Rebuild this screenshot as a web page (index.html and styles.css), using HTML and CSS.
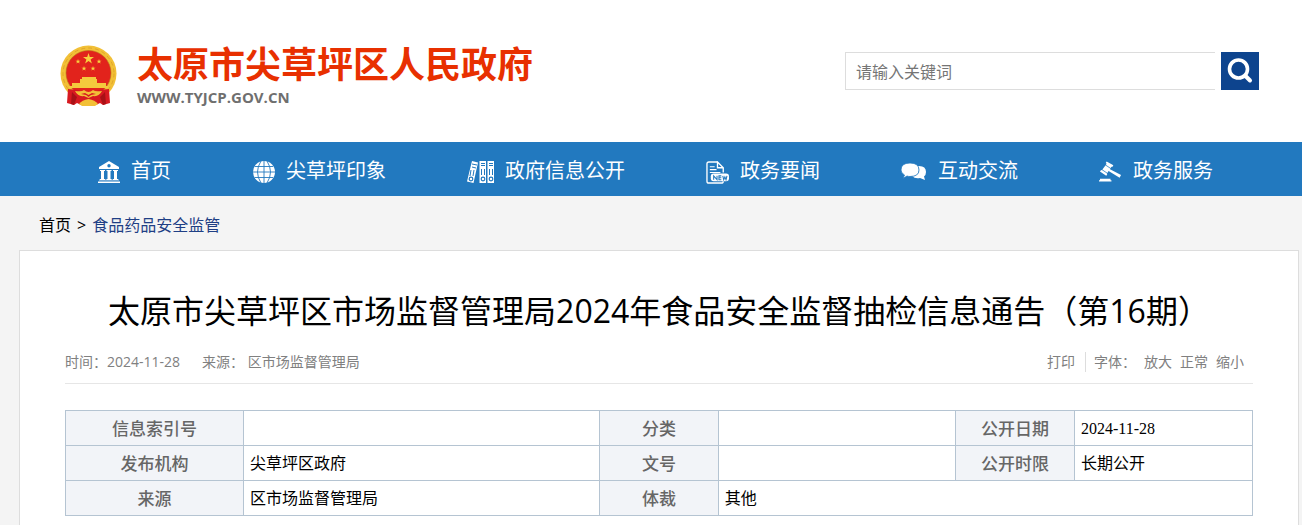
FILE: index.html
```html
<!DOCTYPE html>
<html lang="zh-CN">
<head>
	<meta charset="UTF-8">
	<meta name="viewport" content="width=device-width, initial-scale=1.0">
	<title>太原市尖草坪区人民政府</title>
	<link rel="stylesheet" href="styles.css">
</head>
<body>
	<header class="header">
		<a class="logo" href="#">
			<svg class="emblem" viewBox="0 0 57 61" aria-hidden="true">
				<circle cx="28.500" cy="28.500" r="28" fill="#f2c037"/>
				<circle cx="28.500" cy="28.500" r="25.500" fill="none" stroke="#e0a62a" stroke-width="1" stroke-dasharray="4 3"/>
				<circle cx="28.500" cy="28" r="22.500" fill="#e2231c" stroke="#b9701c" stroke-width=".6"/>
				<path fill="#f8cf3e" d="M28.500 8l1.300 4h4.200l-3.400 2.500 1.300 4-3.400-2.500-3.400 2.500 1.300-4L23 12h4.200z"/>
				<path id="star" fill="#f8cf3e" d="M18 14l.6 1.700h1.900l-1.500 1.100.6 1.800-1.600-1.100-1.600 1.100.6-1.800-1.500-1.100h1.900z"/>
				<use href="#star" x="21"/>
				<use href="#star" x="6" y="7"/>
				<use href="#star" x="15" y="7"/>
				<path fill="#f4c93d" d="M22 32h14v2h1v4h9v3h2v2H9v-2h3v-3h8v-4h2z"/>
				<path fill="#d71920" d="M8 44l10 1 10.500 4L39 45l10-1 1 14-7 2-3-2-4 2H21l-4-2-3 2-7-2z"/>
				<path fill="#a81116" d="M12 47l5 5-3 8-3-1zM45 47l-5 5 3 8 3-1z"/>
				<path fill="#f2c037" d="M15 46q7 1 9-1 4.500 4 9 0 2 2 9 1-3 6-9 5l-4.500 2L24 51q-6 1-9-5z"/>
				<path fill="#d71920" d="M21 49l4-1 3.500 2 3.500-2 4 1-5 1-2.500 2-2.500-2z"/>
				<path fill="#f2c037" d="M19 59q3-4 9.500-5 6.500 1 9.500 5l-3 2H22z"/>
			</svg>
			<span class="logo-text">
				<strong>太原市尖草坪区人民政府</strong>
				<span>WWW.TYJCP.GOV.CN</span>
			</span>
		</a>
		<form class="search">
			<input type="text" placeholder="请输入关键词" aria-label="请输入关键词">
			<button type="button" aria-label="搜索">
				<svg width="26" height="26" viewBox="0 0 26 26" fill="none" stroke="#fff" stroke-linecap="round">
					<circle cx="11.500" cy="11" r="9" stroke-width="3.600"/>
					<path d="M18.500 18l4.500 4.500" stroke-width="4"/>
				</svg>
			</button>
		</form>
	</header>

	<nav class="nav">
		<a href="#">
			<svg width="22" height="22" viewBox="0 0 22 22" fill="#fff">
				<path fill-rule="evenodd" d="M11 0l10 6v2H1V6zM11 3a1.700 1.700 0 1 0 0 3.400A1.700 1.700 0 0 0 11 3z"/>
				<path d="M2 9h5v1H6v8h1v1H2v-1h1v-8H2zM8.500 9h5v1h-1v8h1v1h-5v-1h1v-8h-1zM15 9h5v1h-1v8h1v1h-5v-1h1v-8h-1zM0 20.500h22V22H0z"/>
				<path opacity=".7" d="M1 18.500h20v1H1z"/>
			</svg>
			首页
		</a>
		<a href="#">
			<svg width="23" height="22" viewBox="0 0 23 22">
				<circle cx="12" cy="11" r="11" fill="#fff"/>
				<path fill="none" stroke="#2279bf" stroke-width=".9" d="M12 0v22M1 11h22M3 5.500h18M3 16.500h18M9 0Q2 11 9 22M15 0q7 11 0 22"/>
			</svg>
			尖草坪印象
		</a>
		<a href="#">
			<svg width="27" height="22" viewBox="0 0 27 22">
				<path fill="#fff" d="M5 0l6 1.500L6.500 22 0 20.500zM12.500 0h6.500v22h-6.500zM20.500 0H27v22h-6.500z"/>
				<path fill="none" stroke="#2279bf" d="M5 3l5 1M5 6l4 1M14 2.500h4M14 4.500h4M22 2.500h4M22 4.500h4M14.500 8v6M17.500 8v6M22.500 8v6M25.500 8v6M4 9l-1 6M7 9l-1 6"/>
				<g fill="#fff" stroke="#2279bf" stroke-width="1.200"><circle cx="4" cy="18" r="1.800"/><circle cx="16" cy="18" r="1.800"/><circle cx="24" cy="18" r="1.800"/></g>
			</svg>
			政府信息公开
		</a>
		<a href="#">
			<svg width="23" height="23" viewBox="0 0 24 24">
				<path fill="none" stroke="#fff" stroke-width="1.400" d="M12 1H3Q1 1 1 3v18q0 2 2 2h13q2 0 2-2M18 12V7l-6-6v6h6"/>
				<path fill="none" stroke="#fff" stroke-width="1.200" d="M4 6h5M4 9h7M4 12h11"/>
				<rect x="5" y="13" width="19" height="8" rx="3" fill="#fff"/>
				<path fill="none" stroke="#2279bf" stroke-width="1.100" d="M8 19.500v-4l3.500 4v-4M16 15.500h-2.500v4H16M13.500 17.500H16M17.500 15.500l1 4 1.200-3 1.200 3 1-4"/>
			</svg>
			政务要闻
		</a>
		<a href="#">
			<svg width="26" height="18" viewBox="0 0 26 18">
				<path fill="#fff" d="M16 3q9-1 9 6 0 3-2 4.500l1 3.500-5-2q-5 1-8-2 8-1 7-7z"/>
				<path fill="#fff" stroke="#2279bf" stroke-width=".8" d="M9 0q9 0 9 7 0 6.500-9 6.500-1.500 0-3-.5l-4 2.500L3.500 12Q0 10 0 7q0-7 9-7z"/>
			</svg>
			互动交流
		</a>
		<a href="#">
			<svg width="23" height="22" viewBox="0 0 24 22" fill="#fff">
				<path d="M8 0l7 4-1.200 1.800-.8-.3L11.500 8 23 14l-1.500 3L10 10l-2 3 .7.600L7.500 15 1 10.500 2.200 9l.8.300L8 2.500 7 1.500zM1 18h11v1.500h1V21H0v-1.500h1z"/>
				<path fill="none" stroke="#2279bf" stroke-width=".8" d="M6.500 3.500l6 4M3 8.500l6 4"/>
			</svg>
			政务服务
		</a>
	</nav>

	<div class="crumb">
		<a href="#">首页</a>
		<span>&gt;</span>
		<a class="current" href="#">食品药品安全监管</a>
	</div>

	<main class="article">
		<h1>太原市尖草坪区市场监督管理局2024年食品安全监督抽检信息通告（第16期）</h1>
		<div class="meta">
			<span>时间：2024-11-28</span>
			<span>来源： 区市场监督管理局</span>
			<div class="tools">
				<a class="print" href="#">打印</a>
				<span>字体：</span>
				<a href="#">放大</a>
				<a href="#">正常</a>
				<a href="#">缩小</a>
			</div>
		</div>
		<table class="info">
			<colgroup>
				<col class="w15"><col class="w30"><col class="w10"><col class="w20"><col class="w10"><col class="w15">
			</colgroup>
			<tr>
				<th>信息索引号</th>
				<td></td>
				<th>分类</th>
				<td></td>
				<th>公开日期</th>
				<td>2024-11-28</td>
			</tr>
			<tr>
				<th>发布机构</th>
				<td>尖草坪区政府</td>
				<th>文号</th>
				<td></td>
				<th>公开时限</th>
				<td>长期公开</td>
			</tr>
			<tr>
				<th>来源</th>
				<td>区市场监督管理局</td>
				<th>体裁</th>
				<td colspan="3">其他</td>
			</tr>
		</table>
	</main>
</body>
</html>
```
FILE: styles.css
```css
*{
	margin: 0;
	padding: 0;
	box-sizing: border-box;
}
body{
	display: flex;
	flex-direction: column;
	min-height: 100vh;
	background: #f4f4f4;
	color: #000;
	font-family: "Open Sans", "Noto Sans CJK SC", sans-serif;
	font-size: 16px;
}
a{
	color: inherit;
	text-decoration: none;
}

/* header */
.header{
	display: flex;
	justify-content: space-between;
	align-items: center;
	height: 142px;
	padding: 0 43px 0 60px;
	background: #fff;
}
.logo{
	display: flex;
	align-items: center;
	gap: 20px;
	padding-top: 8px;
}
.emblem{
	width: 57px;
	height: 61px;
}
.logo-text{
	display: flex;
	flex-direction: column;
	color: #6f6f6f;
	font-size: 15px;
	font-weight: 700;
	line-height: 20px;
}
.logo-text strong{
	color: #e83000;
	font-size: 36px;
	font-weight: 700;
	line-height: 44px;
}
.search{
	display: flex;
	gap: 6px;
}
.search input{
	width: 370px;
	height: 38px;
	padding: 2px 10px 0;
	border: 1px solid #ddd;
	border-right: none;
	background: #fff;
	font: inherit;
	outline: none;
}
.search input::placeholder{
	color: #757575;
}
.search button{
	display: flex;
	justify-content: center;
	align-items: center;
	width: 38px;
	height: 38px;
	border: none;
	background: #0d448e;
	cursor: pointer;
}

/* nav */
.nav{
	display: flex;
	gap: 81px;
	height: 54px;
	padding-left: 98px;
	background: #2279bf;
	color: #fff;
	font-size: 20px;
	line-height: 50px;
	white-space: nowrap;
}
.nav a{
	display: flex;
	align-items: center;
	gap: 11px;
	padding-top: 4px;
}
.nav svg{
	margin-top: 2px;
}

.crumb{
	display: flex;
	gap: 6px;
	height: 54px;
	padding-left: 39px;
	line-height: 58px;
}
.crumb .current{
	color: #1f3f85;
}

/* article */
.article{
	flex: 1;
	margin: 0 3px 0 19px;
	padding: 36px 45px 9px;
	border: 1px solid #ddd;
	border-bottom: none;
	background: #fff;
}
.article h1{
	font-size: 32px;
	font-weight: 400;
	line-height: 48px;
	text-align: center;
}
.meta{
	display: flex;
	gap: 22px;
	height: 49px;
	padding-top: 17px;
	border-bottom: 1px solid #e6e6e6;
	color: #808080;
	font-size: 14px;
	line-height: 20px;
}
.tools{
	display: flex;
	gap: 8px;
	margin-left: auto;
	padding-right: 9px;
}
.tools .print{
	height: 20px;
	padding-right: 10px;
	border-right: 1px solid #ddd;
}
.info{
	width: 100%;
	margin-top: 26px;
	border-collapse: collapse;
	table-layout: fixed;
	line-height: 24px;
}
.info th,
.info td{
	height: 35px;
	padding: 6px 6px 4px;
	border: 1px solid #b5c4d2;
}
.info th{
	background: #f2f4f8;
	color: #666;
	font-size: 17px;
	font-weight: 500;
}
.info td{
	font-family: "Liberation Serif", "Noto Sans CJK SC", serif;
}
.w10{
	width: 10%;
}
.w15{
	width: 15%;
}
.w20{
	width: 20%;
}
.w30{
	width: 30%;
}
```
